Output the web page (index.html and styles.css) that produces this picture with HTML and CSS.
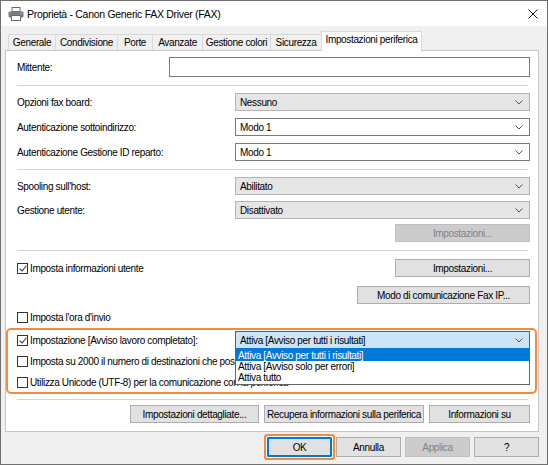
FILE: index.html
```html
<!DOCTYPE html>
<html lang="it">
<head>
    <meta charset="UTF-8">
    <title>Proprietà - Canon Generic FAX Driver (FAX)</title>
    <link rel="stylesheet" href="styles.css">
</head>
<body>
    <div class="window">
        <div class="titlebar">
            <svg class="app-icon" width="16" height="14" viewBox="0 0 16 14">
                <rect x="4" y="0.5" width="8" height="4" fill="#fff" stroke="#6b6b6b"/>
                <rect x="0.5" y="4.5" width="15" height="6" rx="1" fill="#7d7d7d"/>
                <rect x="3.5" y="8.5" width="9" height="5" fill="#fff" stroke="#6b6b6b"/>
                <rect x="12" y="6" width="2" height="1.5" fill="#2fc3d1"/>
            </svg>
            <span class="title">Proprietà - Canon Generic FAX Driver (FAX)</span>
            <svg class="close-icon" width="10" height="10" viewBox="0 0 10 10">
                <path d="M0.5 0.5 L9.5 9.5 M9.5 0.5 L0.5 9.5" stroke="#111" stroke-width="1"/>
            </svg>
        </div>

        <div class="client">
            <div class="tabs">
                <div class="tab" style="width:47px">Generale</div>
                <div class="tab" style="width:62px">Condivisione</div>
                <div class="tab" style="width:35px">Porte</div>
                <div class="tab" style="width:50px">Avanzate</div>
                <div class="tab" style="width:68px">Gestione colori</div>
                <div class="tab" style="width:51px">Sicurezza</div>
                <div class="tab active" style="width:101px">Impostazioni periferica</div>
            </div>

            <div class="panel">
                <div class="row row-sender">
                    <span class="label">Mittente:</span>
                    <div class="textbox"></div>
                </div>

                <div class="sep"></div>

                <div class="row">
                    <span class="label">Opzioni fax board:</span>
                    <div class="combo disabled"><span>Nessuno</span><svg class="chev" width="8" height="5" viewBox="0 0 8 5"><path d="M0.5 0.5 L4 4 L7.5 0.5" fill="none" stroke="#555"/></svg></div>
                </div>
                <div class="row">
                    <span class="label">Autenticazione sottoindirizzo:</span>
                    <div class="combo"><span>Modo 1</span><svg class="chev" width="8" height="5" viewBox="0 0 8 5"><path d="M0.5 0.5 L4 4 L7.5 0.5" fill="none" stroke="#555"/></svg></div>
                </div>
                <div class="row">
                    <span class="label">Autenticazione Gestione ID reparto:</span>
                    <div class="combo"><span>Modo 1</span><svg class="chev" width="8" height="5" viewBox="0 0 8 5"><path d="M0.5 0.5 L4 4 L7.5 0.5" fill="none" stroke="#555"/></svg></div>
                </div>

                <div class="sep"></div>

                <div class="row">
                    <span class="label">Spooling sull'host:</span>
                    <div class="combo disabled"><span>Abilitato</span><svg class="chev" width="8" height="5" viewBox="0 0 8 5"><path d="M0.5 0.5 L4 4 L7.5 0.5" fill="none" stroke="#555"/></svg></div>
                </div>
                <div class="row row-tight">
                    <span class="label">Gestione utente:</span>
                    <div class="combo disabled"><span>Disattivato</span><svg class="chev" width="8" height="5" viewBox="0 0 8 5"><path d="M0.5 0.5 L4 4 L7.5 0.5" fill="none" stroke="#555"/></svg></div>
                </div>
                <div class="row row-right row-tighter">
                    <div class="btn btn-disabled btn-settings">Impostazioni...</div>
                </div>

                <div class="sep"></div>

                <div class="row row-after-sep">
                    <label class="check"><span class="box checked"></span>Imposta informazioni utente</label>
                    <div class="btn btn-settings">Impostazioni...</div>
                </div>
                <div class="row row-right row-faxip">
                    <div class="btn btn-faxip">Modo di comunicazione Fax IP...</div>
                </div>
                <div class="row row-check row-sendtime">
                    <label class="check"><span class="box"></span>Imposta l'ora d'invio</label>
                </div>

                <div class="highlight">
                    <div class="row row-notify">
                        <label class="check"><span class="box checked"></span>Impostazione [Avviso lavoro completato]:</label>
                        <div class="combo-wrap">
                            <div class="combo open"><span>Attiva [Avviso per tutti i risultati]</span><svg class="chev" width="8" height="5" viewBox="0 0 8 5"><path d="M0.5 0.5 L4 4 L7.5 0.5" fill="none" stroke="#555"/></svg></div>
                            <ul class="dropdown">
                                <li class="selected">Attiva [Avviso per tutti i risultati]</li>
                                <li>Attiva [Avviso solo per errori]</li>
                                <li>Attiva tutto</li>
                            </ul>
                        </div>
                    </div>
                    <div class="row row-check">
                        <label class="check"><span class="box"></span>Imposta su 2000 il numero di destinazioni che possono essere specificate</label>
                    </div>
                    <div class="row row-check">
                        <label class="check"><span class="box"></span>Utilizza Unicode (UTF-8) per la comunicazione con la periferica</label>
                    </div>
                </div>

                <div class="sep sep-bottom"></div>

                <div class="row row-buttons">
                    <div class="btn btn-detail">Impostazioni dettagliate...</div>
                    <div class="btn btn-fetch">Recupera informazioni sulla periferica</div>
                    <div class="btn btn-about">Informazioni su</div>
                </div>
            </div>

            <div class="dialog-buttons">
                <div class="btn btn-dialog btn-ok">OK</div>
                <div class="btn btn-dialog">Annulla</div>
                <div class="btn btn-dialog btn-disabled">Applica</div>
                <div class="btn btn-dialog">?</div>
            </div>
        </div>
    </div>
</body>
</html>
```

FILE: styles.css
```css
* {
    box-sizing: border-box;
}

body {
    margin: 0;
    font-family: "Liberation Sans", Arial, sans-serif;
    font-size: 10px;
    letter-spacing: -0.35px;
    color: #000;
}

.window {
    width: 548px;
    height: 465px;
    border: 1px solid #707070;
    background-color: #f0f0f0;
    display: flex;
    flex-direction: column;
}

.titlebar {
    height: 25px;
    flex-shrink: 0;
    background-color: #fff;
    display: flex;
    align-items: center;
    padding: 0 9px 0 7px;
}

.app-icon {
    margin-right: 3px;
}

.title {
    font-size: 10.5px;
    letter-spacing: -0.3px;
    flex: 1;
}

/* tabs */
.client {
    flex: 1;
    padding: 6px 8px 0 4px;
}

.tabs {
    display: flex;
    align-items: flex-end;
    height: 19px;
    padding-left: 3px;
    position: relative;
    z-index: 1;
    margin-bottom: -1px;
}

.tab {
    height: 16px;
    border: 1px solid #d9d9d9;
    border-bottom: none;
    border-right: none;
    background-color: #f0f0f0;
    display: flex;
    align-items: center;
    justify-content: center;
    white-space: nowrap;
    margin-bottom: 1px;
}

.tab.active {
    height: 20px;
    background-color: #fff;
    border-right: 1px solid #d9d9d9;
    margin-bottom: 0;
    align-items: flex-start;
    padding-top: 2px;
}

.panel {
    height: 382px;
    background-color: #fff;
    border: 1px solid #c6c6c6;
    padding: 6px 8px 0 11px;
}

/* rows: spacing is set with margin-top only */
.row {
    display: flex;
    align-items: center;
    justify-content: space-between;
    height: 18px;
    margin-top: 7px;
    white-space: nowrap;
}

.row-sender {
    height: 20px;
    margin-top: 0;
}

.row-tight {
    margin-top: 6px;
}

.row-tighter {
    margin-top: 5px;
}

.row-after-sep {
    margin-top: 8px;
}

.row-faxip {
    margin-top: 9px;
}

.row-right {
    justify-content: flex-end;
}

.row-check {
    height: 17px;
    margin-top: 4px;
}

.row-sendtime {
    margin-top: 5px;
}

.sep {
    height: 1px;
    background-color: #d4d4d4;
    margin: 8px 2px 0 0;
}

.textbox {
    width: 361px;
    height: 20px;
    border: 1px solid #7a7a7a;
    background-color: #fff;
}

.combo {
    width: 295px;
    height: 18px;
    border: 1px solid #7a7a7a;
    background-color: #fff;
    display: flex;
    align-items: center;
    justify-content: space-between;
    padding: 0 6px 0 4px;
}

.combo.disabled {
    background-color: #e5e5e5;
    border-color: #b4b4b4;
}

.combo.open {
    background-color: #cce4f7;
    border-color: #0078d7;
}

.combo-wrap {
    position: relative;
}

.dropdown {
    position: absolute;
    top: 18px;
    left: 0;
    width: 295px;
    margin: 0;
    padding: 0 0 1px;
    list-style: none;
    background-color: #fff;
    border: 1px solid #646464;
    z-index: 2;
}

.dropdown li {
    height: 11px;
    line-height: 11px;
    padding-left: 2px;
}

.dropdown li.selected {
    background-color: #0078d7;
    color: #fff;
}

/* checkboxes */
.check {
    display: flex;
    align-items: center;
}

.box {
    width: 11px;
    height: 11px;
    border: 1px solid #333;
    background-color: #fff;
    margin-right: 2px;
    position: relative;
}

.box.checked::after {
    content: "";
    position: absolute;
    left: 3px;
    top: 0;
    width: 3px;
    height: 6px;
    border: solid #333;
    border-width: 0 1px 1px 0;
    transform: rotate(40deg);
}

.highlight {
    border: 2px solid #f08b3f;
    border-radius: 5px;
    margin: 2px -7px 0 -11px;
    padding: 1px 5px 1px 9px;
}

.highlight .row-notify {
    margin-top: 0;
}

.sep-bottom {
    margin-top: 5px;
}

/* buttons */
.btn {
    height: 18px;
    border: 1px solid #adadad;
    background-color: #e1e1e1;
    display: flex;
    align-items: center;
    justify-content: center;
    white-space: nowrap;
}

.btn-disabled {
    background-color: #cccccc;
    border-color: #bfbfbf;
    color: #838383;
}

.btn-settings {
    width: 135px;
}

.btn-faxip {
    width: 173px;
}

.row-buttons {
    justify-content: flex-end;
    gap: 5px;
    margin-top: 5px;
}

.btn-detail {
    width: 129px;
}

.btn-fetch {
    width: 160px;
}

.btn-about {
    width: 101px;
}

.dialog-buttons {
    display: flex;
    justify-content: flex-end;
    gap: 4px;
    padding-top: 5px;
}

.btn-dialog {
    width: 65px;
    height: 20px;
}

.btn-ok {
    border: 1px solid #0078d7;
    box-shadow: inset 0 0 0 1px #0078d7, 0 0 0 1px #fff, 0 0 0 3px #f08b3f;
    border-radius: 1px;
}
```
